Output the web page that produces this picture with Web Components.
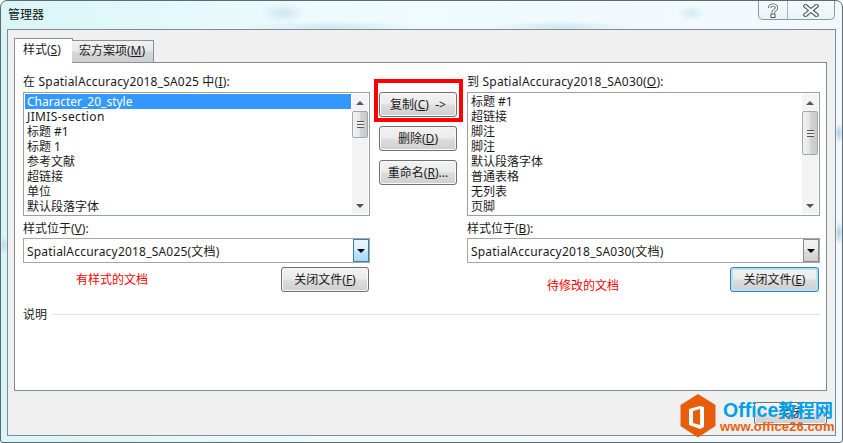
<!DOCTYPE html>
<html lang="zh">
<head>
<meta charset="utf-8">
<title>管理器</title>
<style>
  html, body { margin: 0; padding: 0; }
  body { font: 12px/15px "Noto Sans", "Noto Sans CJK SC", sans-serif; color: #1a1a1a; }
</style>
</head>
<body>
<manager-window>
  <span slot="title">管理器</span>
  <style-tabs>
    <span slot="first">样式(<u>S</u>)</span>
    <span slot="second">宏方案项(<u>M</u>)</span>

    <style-column slot="left">
      <span slot="head">在 SpatialAccuracy2018_SA025 中(<u>I</u>):</span>
      <list-box thumb-top="3" thumb-height="27">
        <list-row selected>Character_20_style</list-row>
        <list-row style="letter-spacing:.35px">JIMIS-section</list-row>
        <list-row>标题 #1</list-row>
        <list-row>标题 1</list-row>
        <list-row>参考文献</list-row>
        <list-row>超链接</list-row>
        <list-row>单位</list-row>
        <list-row>默认段落字体</list-row>
      </list-box>
      <span slot="where">样式位于(<u>V</u>):</span>
      <combo-box slot="combo" hot>SpatialAccuracy2018_SA025(文档)</combo-box>
      <span slot="note" class="left-note">有样式的文档</span>
      <push-button slot="close" style="width:88px">关闭文件(<u>F</u>)</push-button>
    </style-column>

    <action-column slot="middle">
      <push-button>复制(<u>C</u>)&nbsp; -&gt;</push-button>
      <push-button>删除(<u>D</u>)</push-button>
      <push-button>重命名(<u>R</u>)...</push-button>
    </action-column>

    <style-column slot="right" note-offset="6">
      <span slot="head">到 SpatialAccuracy2018_SA030(<u>O</u>):</span>
      <list-box thumb-top="3" thumb-height="44">
        <list-row>标题 #1</list-row>
        <list-row>超链接</list-row>
        <list-row>脚注</list-row>
        <list-row>脚注</list-row>
        <list-row>默认段落字体</list-row>
        <list-row>普通表格</list-row>
        <list-row>无列表</list-row>
        <list-row>页脚</list-row>
      </list-box>
      <span slot="where">样式位于(<u>B</u>):</span>
      <combo-box slot="combo">SpatialAccuracy2018_SA030(文档)</combo-box>
      <span slot="note">待修改的文档</span>
      <push-button slot="close" default style="width:89px">关闭文件(<u>E</u>)</push-button>
    </style-column>

    <span slot="desc">说明</span>
  </style-tabs>
  <push-button slot="footer" style="width:73px;height:23px">关闭</push-button>
  <site-badge slot="footer"></site-badge>
</manager-window>

<script>
// window frame, caption buttons and grey client area
class ManagerWindow extends HTMLElement {
  constructor() {
    super();
    this.attachShadow({mode: 'open'}).innerHTML = `
      <style>
        :host {
          display: flex; flex-direction: column; box-sizing: border-box;
          width: 843px; height: 443px; padding: 0 6px 6px 6px;
          border: 1px solid #62686c; border-radius: 7px 7px 3px 3px;
          background:
            radial-gradient(ellipse 22px 10px at 282px 12px, #cfe6f2, transparent),
            radial-gradient(ellipse 90px 6px at 330px 26px, #cfe8f4, transparent),
            radial-gradient(ellipse 70px 6px at 560px 26px, #cfe6f3, transparent),
            radial-gradient(ellipse 14px 8px at 690px 12px, #d4eaf5, transparent),
            radial-gradient(ellipse 4px 10px at 838px 132px, #a9cbe2, transparent),
            radial-gradient(ellipse 4px 12px at 838px 232px, #a9cbe2, transparent),
            radial-gradient(ellipse 4px 10px at 3px 244px, #bcd9ea, transparent),
            linear-gradient(90deg, #d8f6f8, #eefbfd 40%, #f2f9fc);
          position: relative; overflow: hidden;
        }
        .bar { flex: none; height: 28px; display: flex; justify-content: space-between; align-items: flex-start; }
        .title { padding: 6px 0 0 1px; color: #111; }
        .caption {
          display: flex; height: 19px; margin-right: 1px; box-sizing: border-box;
          border: 1px solid #8d979c; border-top: 0; border-radius: 0 0 5px 5px;
          background: linear-gradient(#f4fbfd, #e9f4f8);
        }
        .caption span { display: flex; align-items: center; justify-content: center; }
        .help { width: 28px; border-right: 1px solid #a9b3b8; }
        .close { width: 46px; }
        .client {
          flex: 1; display: flex; flex-direction: column; min-height: 0; box-sizing: border-box;
          border: 1px solid #82898f; background: #f0f0f0; padding: 8px 8px 0 6px;
        }
        .foot { display: flex; justify-content: flex-end; margin-top: 11px; }
      </style>
      <div class="bar">
        <div class="title"><slot name="title"></slot></div>
        <div class="caption">
          <span class="help"><svg width="12" height="15" viewBox="0 0 12 15"><path d="M2.5 5 C2.5 1 9.5 1 9.5 5 C9.5 7.5 6 7 6 10" fill="none" stroke="#555" stroke-width="3.2"/><path d="M2.5 5 C2.5 1 9.5 1 9.5 5 C9.5 7.5 6 7 6 10" fill="none" stroke="#fff" stroke-width="1.6"/><rect x="4" y="11" width="4" height="3.5" fill="#fff" stroke="#555"/></svg></span>
          <span class="close"><svg width="16" height="13" viewBox="0 0 16 13"><path d="M2.5 2 L13.5 11 M13.5 2 L2.5 11" stroke="#555" stroke-width="4.2" stroke-linecap="square"/><path d="M2.5 2 L13.5 11 M13.5 2 L2.5 11" stroke="#f4f6f7" stroke-width="2.2" stroke-linecap="square"/></svg></span>
        </div>
      </div>
      <div class="client">
        <slot></slot>
        <div class="foot"><slot name="footer"></slot></div>
      </div>`;
  }
}

// tab strip plus the white page holding the two style columns
class StyleTabs extends HTMLElement {
  constructor() {
    super();
    this.attachShadow({mode: 'open'}).innerHTML = `
      <style>
        :host { display: block; height: 353px; }
        .strip { display: flex; align-items: flex-end; height: 25px; position: relative; z-index: 1; margin-bottom: -1px; }
        .tab { box-sizing: border-box; border: 1px solid #8a9097; }
        .on { width: 59px; height: 25px; background: #fff; border-bottom: 0; padding: 3px 0 0 8px; }
        .off { width: 82px; height: 23px; margin-left: -1px; padding: 2px 0 0 7px; border-left: 0;
               background: linear-gradient(#f2f2f2, #e8e8e8 48%, #d6d6d6 52%, #cfcfcf); }
        .page {
          box-sizing: border-box; height: 329px; border: 1px solid #82898f; background: #fff;
          padding: 11px 6px 0 8px;
        }
        .cols { display: grid; grid-template-columns: 347px 97px 353px; }
        .desc { display: flex; align-items: center; gap: 6px; margin-top: 15px; height: 15px; }
        .desc i { flex: 1; height: 1px; background: #d8e2ec; }
      </style>
      <div class="strip">
        <div class="tab on"><slot name="first"></slot></div>
        <div class="tab off"><slot name="second"></slot></div>
      </div>
      <div class="page">
        <div class="cols">
          <slot name="left"></slot>
          <slot name="middle"></slot>
          <slot name="right"></slot>
        </div>
        <div class="desc"><slot name="desc"></slot><i></i></div>
      </div>`;
  }
}

class StyleColumn extends HTMLElement {
  constructor() {
    super();
    this.attachShadow({mode: 'open'}).innerHTML = `
      <style>
        :host { display: block; }
        .head { height: 18px; letter-spacing: .2px; white-space: nowrap; }
        .where { height: 18px; margin-top: 4px; padding-top: 1px; box-sizing: border-box; }
        .row { display: flex; justify-content: space-between; height: 25px; margin-top: 4px; margin-right: 1px; }
        .note { color: #f00; padding: 5px 0 0 53px; }
        :host([note-offset]) .note { padding: 11px 0 0 80px; }
      </style>
      <div class="head"><slot name="head"></slot></div>
      <slot></slot>
      <div class="where"><slot name="where"></slot></div>
      <slot name="combo"></slot>
      <div class="row">
        <div class="note"><slot name="note"></slot></div>
        <slot name="close"></slot>
      </div>`;
  }
}

class ActionColumn extends HTMLElement {
  constructor() {
    super();
    this.attachShadow({mode: 'open'}).innerHTML = `
      <style>
        :host { display: flex; flex-direction: column; gap: 9px; padding: 18px 10px 0 9px; position: relative; }
        .mark { position: absolute; left: 4px; top: 5px; width: 89px; height: 43px; box-sizing: border-box; border: 4px solid #f00; }
      </style>
      <slot></slot>
      <div class="mark"></div>`;
  }
}

class ListBox extends HTMLElement {
  constructor() {
    super();
    const top = this.getAttribute('thumb-top');
    const h = this.getAttribute('thumb-height');
    this.attachShadow({mode: 'open'}).innerHTML = `
      <style>
        :host {
          display: flex; box-sizing: border-box; height: 124px; overflow: hidden;
          border: 1px solid #9a9fa5; padding: 1px; background: #fff;
        }
        .rows { flex: 1; min-width: 0; display: flex; flex-direction: column; }
        .sb { flex: none; width: 16px; margin-left: 1px; display: flex; flex-direction: column; background: #f3f3f3; }
        .arrow { flex: none; height: 17px; display: flex; align-items: center; justify-content: center; }
        .arrow b { width: 0; height: 0; border-left: 4px solid transparent; border-right: 4px solid transparent; }
        .up b { border-bottom: 4px solid #555; }
        .down b { border-top: 4px solid #555; }
        .track { flex: 1; padding-top: ${top - 3}px; }
        .thumb {
          box-sizing: border-box; height: ${h}px; border: 1px solid #a2a8ad; border-radius: 2px;
          display: flex; align-items: center; justify-content: center;
          background: linear-gradient(90deg, #f3f3f3, #e4e4e4 50%, #d4d4d4 52%, #c9c9c9);
        }
        .thumb i { display: block; width: 7px; height: 7px;
          background: repeating-linear-gradient(#555 0 1px, #eee 1px 3px); }
      </style>
      <div class="rows"><slot></slot></div>
      <div class="sb">
        <div class="arrow up"><b></b></div>
        <div class="track"><div class="thumb"><i></i></div></div>
        <div class="arrow down"><b></b></div>
      </div>`;
  }
}

class ListRow extends HTMLElement {
  constructor() {
    super();
    this.attachShadow({mode: 'open'}).innerHTML = `
      <style>
        :host { display: block; height: 15px; line-height: 15px; padding-left: 2px; white-space: nowrap; }
        :host([selected]) { background: #3399ff; color: #fff; }
      </style>
      <slot></slot>`;
  }
}

class ComboBox extends HTMLElement {
  constructor() {
    super();
    this.attachShadow({mode: 'open'}).innerHTML = `
      <style>
        :host {
          display: flex; box-sizing: border-box; height: 25px; align-items: stretch;
          border: 1px solid #a6a6a6; background: #fff;
        }
        .val { flex: 1; line-height: 25px; height: 23px; padding-left: 3px; white-space: nowrap; letter-spacing: .2px; }
        .btn {
          flex: none; width: 16px; box-sizing: border-box; border: 1px solid #8b8b8b;
          display: flex; align-items: center; justify-content: center;
          background: linear-gradient(#f2f2f2, #ebebeb 48%, #dcdcdc 52%, #cfcfcf);
        }
        :host([hot]) .btn { border-color: #3c7fb1; background: linear-gradient(#eaf6fd, #d9f0fc 48%, #bee6fd 52%, #a7d9f5); }
        .btn b { width: 0; height: 0; border-left: 4px solid transparent; border-right: 4px solid transparent; border-top: 4px solid #000; }
      </style>
      <div class="val"><slot></slot></div>
      <div class="btn"><b></b></div>`;
  }
}

class PushButton extends HTMLElement {
  constructor() {
    super();
    this.attachShadow({mode: 'open'}).innerHTML = `
      <style>
        :host {
          display: flex; flex: none; box-sizing: border-box; height: 25px; align-items: center; justify-content: center;
          border: 1px solid #707070; border-radius: 3px; white-space: nowrap;
          box-shadow: inset 0 0 0 1px #f8f8f8;
          background: linear-gradient(#f2f2f2, #ebebeb 48%, #dddddd 52%, #cfcfcf);
        }
        :host([default]) { border-color: #3c7fb1; box-shadow: inset 0 0 0 2px #aee3fb; }
      </style>
      <slot></slot>`;
  }
}

// watermark in the lower right corner, over the dialog's close button
class SiteBadge extends HTMLElement {
  constructor() {
    super();
    this.attachShadow({mode: 'open'}).innerHTML = `
      <style>
        :host { position: absolute; left: 679px; top: 393px; width: 160px; height: 46px; display: flex; gap: 4px; }
        svg { flex: none; }
        .txt { display: flex; flex-direction: column; padding-top: 3px; white-space: nowrap; }
        .a { font: bold 19.5px/24px "Liberation Sans", sans-serif; color: #00a0e9; padding-left: 3px; }
        .a span { font: bold 18.3px/24px "Noto Sans CJK SC", sans-serif; }
        .b { font: bold 13px/17px "Liberation Sans", sans-serif; letter-spacing: .1px; color: #e8610c; margin-top: -4px; }
      </style>
      <svg width="36" height="44" viewBox="0 0 36 44">
        <path d="M18 0 L35.5 11 L35.5 32 L18 43.5 L.5 32 L.5 11 Z" fill="#e85d0c"/>
        <path d="M9 15 L20 12 L24 13 L24 33 L20 35 L9 31 Z" fill="#fff"/>
        <path d="M13 17 L20 15 L20 31 L13 29 Z" fill="#e85d0c"/>
      </svg>
      <div class="txt">
        <div class="a">Office<span>教程网</span></div>
        <div class="b">www.office26.com</div>
      </div>`;
  }
}

customElements.define('manager-window', ManagerWindow);
customElements.define('style-tabs', StyleTabs);
customElements.define('style-column', StyleColumn);
customElements.define('action-column', ActionColumn);
customElements.define('list-box', ListBox);
customElements.define('list-row', ListRow);
customElements.define('combo-box', ComboBox);
customElements.define('push-button', PushButton);
customElements.define('site-badge', SiteBadge);
</script>
</body>
</html>
